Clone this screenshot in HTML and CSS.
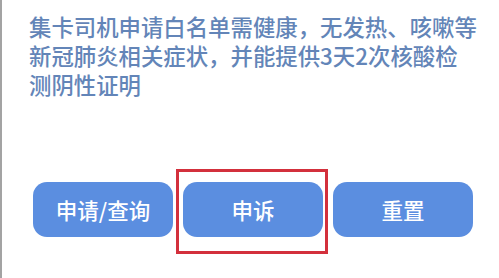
FILE: index.html
```html
<!DOCTYPE html>
<html>
    <head>
        <title>集卡司机申请白名单</title>
        <link rel="stylesheet" href="styles.css">
    </head>
<body>
    <div class="page">
        <p class="notice">集卡司机申请白名单需健康，无发热、咳嗽等新冠肺炎相关症状，并能提供3天2次核酸检测阴性证明</p>
        <div class="actions">
            <div role="button" tabindex="0">申请/查询</div>
            <div role="button" tabindex="0" class="marked">申诉</div>
            <div role="button" tabindex="0">重置</div>
        </div>
    </div>
</body>
</html>
```

FILE: styles.css
```css
html, body {
    margin: 0;
    background: #fff;
}

.page {
    height: 278px;
    box-sizing: border-box;
    border-left: 2px solid #a3a3a3;
    font-family: "Noto Sans CJK SC", "Noto Sans", sans-serif;
}

.notice {
    margin: 0;
    padding: 12px 20px 0 27px;
    font-size: 22.4px;
    font-weight: 500;
    line-height: 29px;
    color: #6385b8;
}

.actions {
    display: flex;
    gap: 10px;
    margin-top: 83px;
    padding-left: 31px;
}

[role="button"] {
    position: relative;
    width: 140px;
    height: 55px;
    line-height: 55px;
    border-radius: 14px;
    background-color: #5b8ee0;
    color: #fff;
    font-size: 21.5px;
    font-weight: 500;
    text-align: center;
    cursor: pointer;
}

.marked::after {
    content: "";
    position: absolute;
    left: -7px;
    right: -5px;
    top: -13px;
    bottom: -17px;
    border: 3px solid #d3303c;
}
```
